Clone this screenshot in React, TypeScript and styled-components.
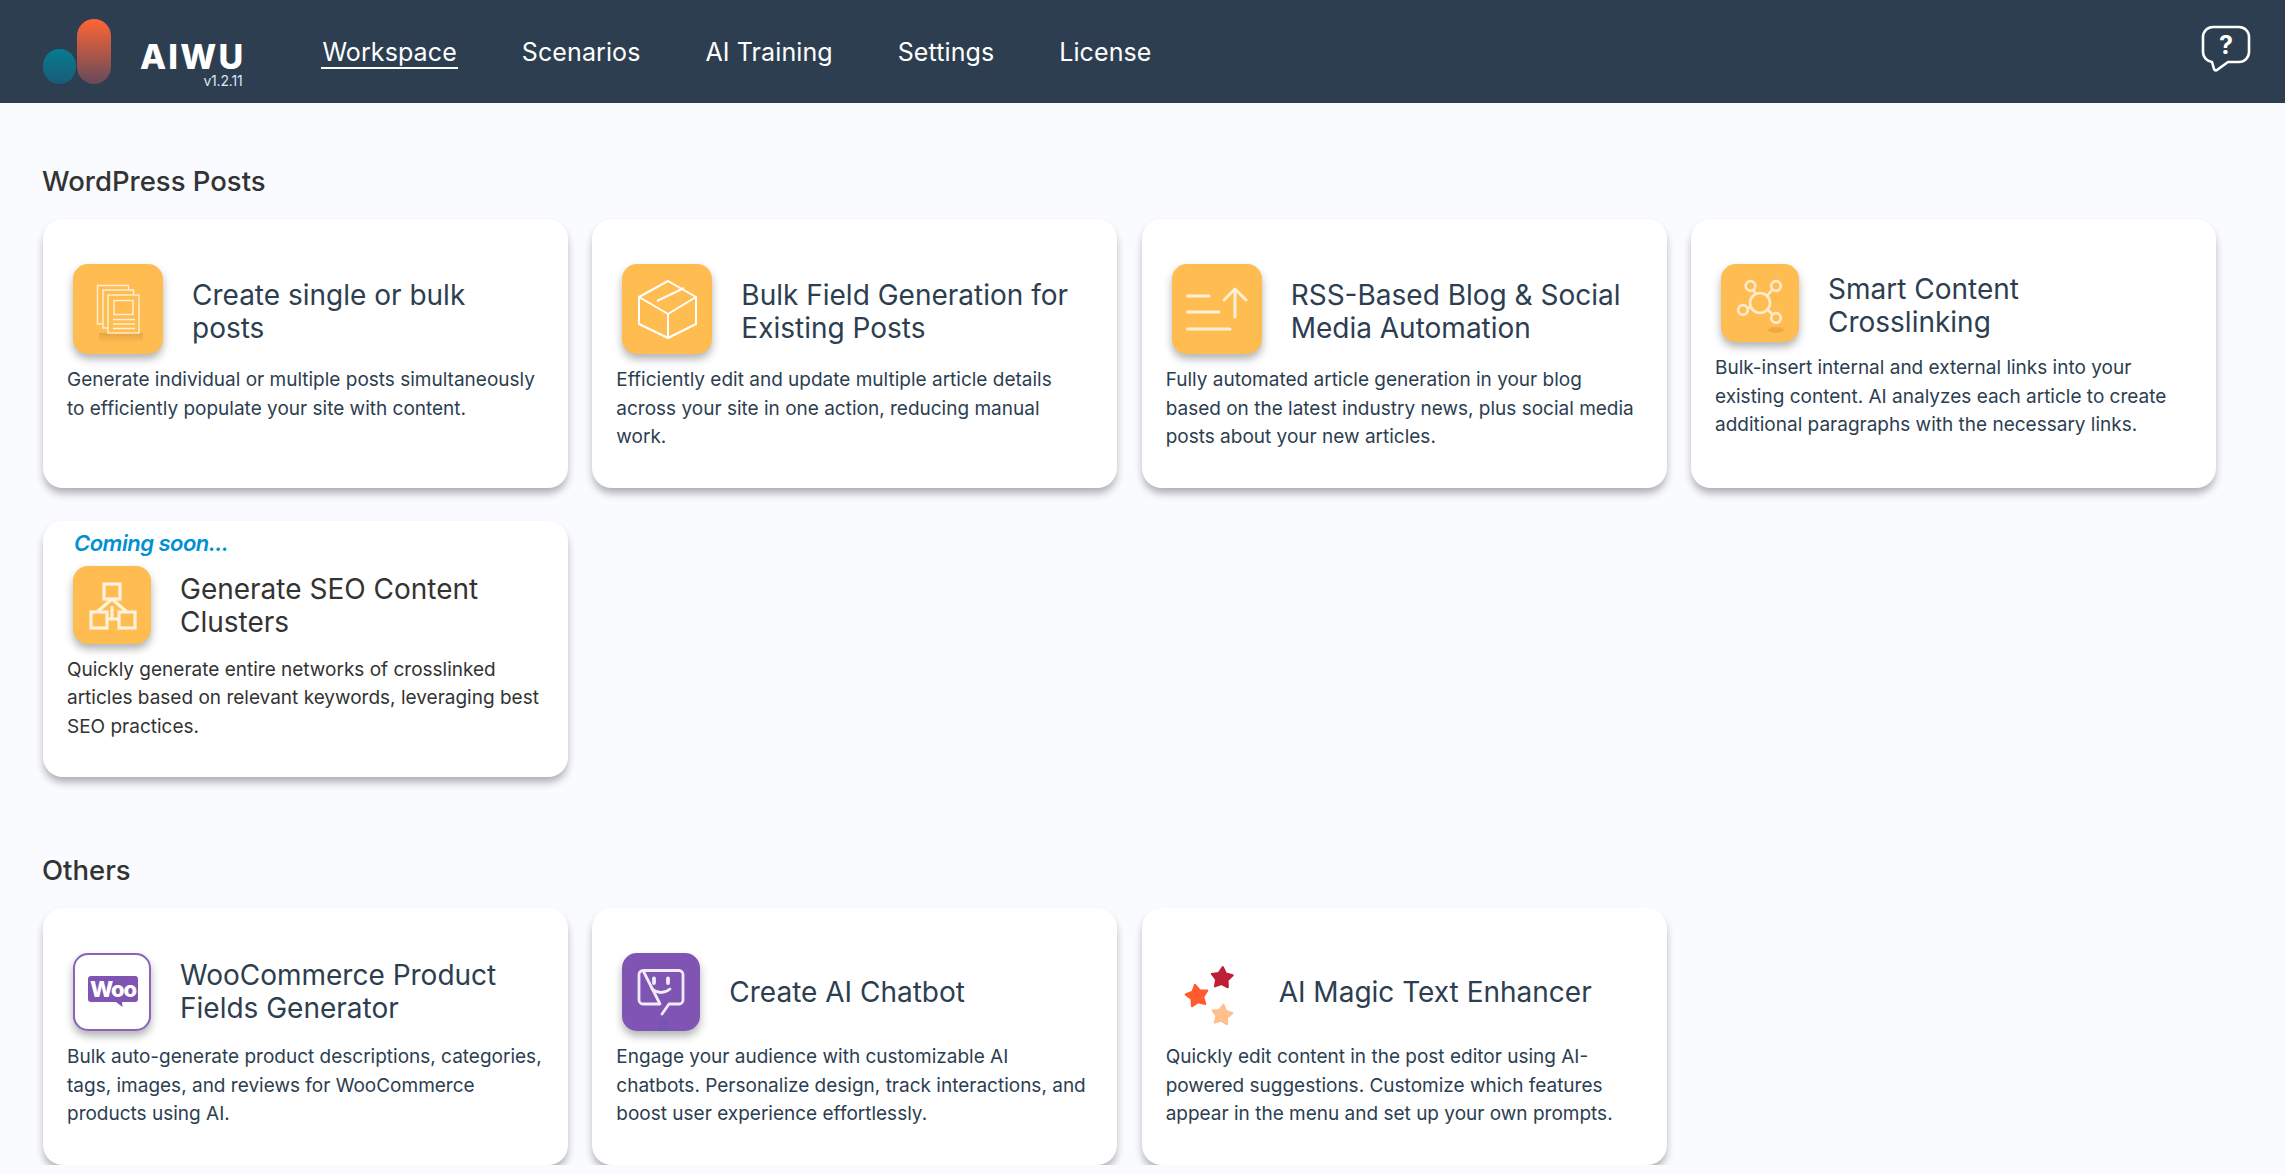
import React from "react";
import styled, { createGlobalStyle } from "styled-components";

const GlobalStyle = createGlobalStyle`
  html, body {
    margin: 0;
    padding: 0;
    background: #f9fbff;
    font-family: "Inter", "Liberation Sans", sans-serif;
  }
`;

const starPoints = (cx: number, cy: number, r: number, rot: number) => {
  const pts: string[] = [];
  for (let i = 0; i < 10; i++) {
    const radius = i % 2 === 0 ? r : r * 0.55;
    const a = ((rot + i * 36 - 90) * Math.PI) / 180;
    pts.push(`${(cx + radius * Math.cos(a)).toFixed(1)},${(cy + radius * Math.sin(a)).toFixed(1)}`);
  }
  return pts.join(" ");
};

const LogoMark = () => (
  <svg width="68" height="65" viewBox="0 0 68 65">
    <defs>
      <linearGradient id="logoTall" x1="0" y1="0" x2="0" y2="1">
        <stop offset="0" stopColor="#ff6534" />
        <stop offset="1" stopColor="#654a5c" />
      </linearGradient>
      <linearGradient id="logoShort" x1="0" y1="0" x2="0" y2="1">
        <stop offset="0" stopColor="#047d90" />
        <stop offset="1" stopColor="#1b5a76" />
      </linearGradient>
    </defs>
    <rect x="0" y="30" width="33" height="35" rx="16.5" fill="url(#logoShort)" />
    <rect x="34" y="0" width="34" height="65" rx="17" fill="url(#logoTall)" />
  </svg>
);

const HelpIcon = () => (
  <svg width="50" height="48" viewBox="0 0 50 48" fill="none">
    <path
      d="M12 2 H38 a10 10 0 0 1 10 10 V27 a10 10 0 0 1 -10 10 H27 L16 45 a2 2 0 0 1 -3 -1 L11 37 a10 10 0 0 1 -9 -10 V12 a10 10 0 0 1 10 -10 Z"
      stroke="#fff"
      strokeWidth="2.6"
      strokeLinejoin="round"
    />
    <text x="25" y="28.500" textAnchor="middle" fill="#fff" fontSize="25" fontWeight="700" fontFamily="Inter, sans-serif">
      ?
    </text>
  </svg>
);

const PagesIcon = () => (
  <svg width="90" height="90" viewBox="0 0 90 90" fill="none" stroke="#ffefd6" strokeWidth="1.4">
    <defs>
      <linearGradient id="pagesShadow" x1="0" y1="0" x2="0" y2="1">
        <stop offset="0" stopColor="#d99a3c" stopOpacity="0.7" />
        <stop offset="1" stopColor="#d99a3c" stopOpacity="0" />
      </linearGradient>
    </defs>
    <rect x="26" y="69" width="44" height="10" fill="url(#pagesShadow)" stroke="none" />
    <path d="M30 60 H24.5 V21.5 H55.5 V26" />
    <path d="M35 64 H30 V26 H60.5 V31" />
    <rect x="35" y="31" width="31" height="38" />
    <rect x="41" y="36.500" width="19" height="14" />
    <path d="M40 55.500 H62 M40 60 H62 M40 64.500 H62" />
  </svg>
);

const BoxIcon = () => (
  <svg width="90" height="90" viewBox="0 0 90 90" fill="none" stroke="#fff" strokeWidth="2" strokeLinejoin="round">
    <path d="M46 17 L74 33 V60 L46 74 L17 60 V33 Z" />
    <path d="M17 33 L46 50 L74 33 M46 50 V74" />
    <path d="M35 37 L62 24" />
  </svg>
);

const ListUpIcon = () => (
  <svg width="90" height="90" viewBox="0 0 90 90" fill="none" stroke="#ffefd6" strokeWidth="3" strokeLinecap="round" strokeLinejoin="round">
    <path d="M15.500 32 H37 M15.500 48 H47 M15.500 65 H58" />
    <path d="M63 53 V25 M52 36 L63 25 L74 36" />
  </svg>
);

const NetworkIcon = () => (
  <svg width="78" height="78" viewBox="0 0 78 78" fill="none" stroke="#ffeacd" strokeWidth="2.700">
    <ellipse cx="55" cy="66" rx="8" ry="3" fill="#d99a3c" opacity="0.5" stroke="none" />
    <circle cx="39" cy="39" r="10" />
    <circle cx="29.500" cy="22" r="4.800" />
    <circle cx="55" cy="22" r="4.800" />
    <circle cx="22" cy="46" r="4.800" />
    <circle cx="55" cy="54" r="4.800" />
    <path d="M32 26 L35 30 M51 26 L46 32 M27 44 L29.500 43 M47 46 L51 50" />
  </svg>
);

const ClusterIcon = () => (
  <svg width="78" height="78" viewBox="0 0 78 78" fill="none" stroke="#fff1dc" strokeWidth="3.200">
    <rect x="31" y="18" width="16" height="15" />
    <rect x="18" y="46" width="16" height="16" />
    <rect x="46" y="46" width="16" height="16" />
    <path d="M39 33 L24 46 M39 33 L54 46 M34 53 H46 M39 40 V53" />
  </svg>
);

const WooIcon = () => (
  <svg width="74" height="74" viewBox="0 0 74 74">
    <path d="M16 21 H60 a3 3 0 0 1 3 3 V44 a3 3 0 0 1 -3 3 H47 L47.500 52 L41 47 H16 a3 3 0 0 1 -3 -3 V24 a3 3 0 0 1 3 -3 Z" fill="#7f54b3" />
    <text x="38" y="41.500" textAnchor="middle" fill="#fff" fontSize="22" fontWeight="800" fontFamily="Inter, sans-serif" letterSpacing="-1.200">
      Woo
    </text>
  </svg>
);

const ChatIcon = () => (
  <svg width="78" height="78" viewBox="0 0 78 78" fill="none" stroke="#f1eaf8" strokeWidth="2.800" strokeLinecap="round" strokeLinejoin="round">
    <defs>
      <pattern id="chatDots" width="2.400" height="2.400" patternUnits="userSpaceOnUse">
        <circle cx="1.200" cy="1.200" r="0.800" fill="#5a58b0" stroke="none" />
      </pattern>
    </defs>
    <path d="M41 63 L35 78 H49 Z" fill="url(#chatDots)" stroke="none" />
    <path d="M21 17.500 H57 a4 4 0 0 1 4 4 V47 a4 4 0 0 1 -4 4 H47 L40 61 M38 51 H21 a4 4 0 0 1 -4 -4 V21.500 a4 4 0 0 1 4 -4 Z" />
    <path d="M32 25.500 V30 M46 25.500 V30" strokeWidth="3.800" />
    <path d="M30 36 Q39 43 48 36" />
  </svg>
);

const StarsIcon = () => (
  <svg width="78" height="78" viewBox="0 0 78 78" strokeLinejoin="round" strokeWidth="2">
    <polygon points={starPoints(50, 25, 11, 4)} fill="#bb2036" stroke="#bb2036" />
    <polygon points={starPoints(25, 43, 11.500, -10)} fill="#ff5b2e" stroke="#ff5b2e" />
    <polygon points={starPoints(50, 62, 10.500, 8)} fill="#ffbf8e" stroke="#ffbf8e" />
  </svg>
);

type CardData = {
  title: string;
  text: string;
  icon: React.ReactNode;
  size: number;
  tile?: "orange" | "purple" | "white" | "none";
  soon?: boolean;
  titleDrop?: number;
};

const postCards: CardData[] = [
  {
    title: "Create single or bulk\nposts",
    text: "Generate individual or multiple posts simultaneously\nto efficiently populate your site with content.",
    icon: <PagesIcon />,
    size: 90,
    titleDrop: 5,
  },
  {
    title: "Bulk Field Generation for\nExisting Posts",
    text: "Efficiently edit and update multiple article details\nacross your site in one action, reducing manual\nwork.",
    icon: <BoxIcon />,
    size: 90,
    titleDrop: 5,
  },
  {
    title: "RSS-Based Blog & Social\nMedia Automation",
    text: "Fully automated article generation in your blog\nbased on the latest industry news, plus social media\nposts about your new articles.",
    icon: <ListUpIcon />,
    size: 90,
    titleDrop: 5,
  },
  {
    title: "Smart Content\nCrosslinking",
    text: "Bulk-insert internal and external links into your\nexisting content. AI analyzes each article to create\nadditional paragraphs with the necessary links.",
    icon: <NetworkIcon />,
    size: 78,
    titleDrop: 5,
  },
  {
    title: "Generate SEO Content\nClusters",
    text: "Quickly generate entire networks of crosslinked\narticles based on relevant keywords, leveraging best\nSEO practices.",
    icon: <ClusterIcon />,
    size: 78,
    soon: true,
    titleDrop: 2,
  },
];

const otherCards: CardData[] = [
  {
    title: "WooCommerce Product\nFields Generator",
    text: "Bulk auto-generate product descriptions, categories,\ntags, images, and reviews for WooCommerce\nproducts using AI.",
    icon: <WooIcon />,
    size: 78,
    tile: "white",
  },
  {
    title: "Create AI Chatbot",
    text: "Engage your audience with customizable AI\nchatbots. Personalize design, track interactions, and\nboost user experience effortlessly.",
    icon: <ChatIcon />,
    size: 78,
    tile: "purple",
  },
  {
    title: "AI Magic Text Enhancer",
    text: "Quickly edit content in the post editor using AI-\npowered suggestions. Customize which features\nappear in the menu and set up your own prompts.",
    icon: <StarsIcon />,
    size: 78,
    tile: "none",
  },
];

const navItems = ["Workspace", "Scenarios", "AI Training", "Settings", "License"];

const FeatureCard = ({ card }: { card: CardData }) => (
  <Card>
    {card.soon && <SoonLabel>Coming soon...</SoonLabel>}
    <CardHead>
      <IconTile $size={card.size} $tile={card.tile ?? "orange"}>
        {card.icon}
      </IconTile>
      <CardTitle $soon={!!card.soon} $drop={card.titleDrop ?? 0}>
        {card.title}
      </CardTitle>
    </CardHead>
    <CardText $soon={!!card.soon}>{card.text}</CardText>
  </Card>
);

export default function App() {
  return (
    <>
      <GlobalStyle />
      <TopBar>
        <Brand>
          <LogoMark />
          <BrandText>
            <BrandName>AIWU</BrandName>
            <BrandVersion>v1.2.11</BrandVersion>
          </BrandText>
        </Brand>
        <Nav>
          {navItems.map((item, i) => (
            <NavLink key={item} $active={i === 0}>
              {item}
            </NavLink>
          ))}
        </Nav>
        <HelpButton>
          <HelpIcon />
        </HelpButton>
      </TopBar>
      <Main>
        <Section>
          <SectionTitle>WordPress Posts</SectionTitle>
          <CardGrid>
            {postCards.map((card) => (
              <FeatureCard key={card.title} card={card} />
            ))}
          </CardGrid>
        </Section>
        <Section>
          <SectionTitle>Others</SectionTitle>
          <CardGrid>
            {otherCards.map((card) => (
              <FeatureCard key={card.title} card={card} />
            ))}
          </CardGrid>
        </Section>
      </Main>
    </>
  );
}

const TopBar = styled.header`
  display: flex;
  align-items: center;
  height: 103px;
  padding: 0 34px 0 43px;
  background: #2c3e50;
`;

const Brand = styled.div`
  display: flex;
  align-items: center;
  gap: 29px;
`;

const BrandText = styled.div`
  display: flex;
  flex-direction: column;
  align-items: flex-end;
  margin-top: 27px;
`;

const BrandName = styled.div`
  color: #fff;
  font-size: 34px;
  line-height: 30px;
  font-weight: 800;
  letter-spacing: 2.2px;
`;

const BrandVersion = styled.div`
  margin-top: 1px;
  padding-right: 3px;
  color: #dfe6f0;
  font-size: 14px;
  line-height: 16px;
  letter-spacing: -0.2px;
`;

const Nav = styled.nav`
  display: flex;
  align-items: center;
  gap: 63px;
  margin-left: 76px;
`;

const NavLink = styled.a<{ $active: boolean }>`
  display: block;
  margin-top: 2px;
  padding: 0 1px 0;
  color: #fff;
  font-size: 25px;
  line-height: 30px;
  font-weight: 400;
  letter-spacing: 0.1px;
  border-bottom: 2px solid ${(props) => (props.$active ? "#fff" : "transparent")};
`;

const HelpButton = styled.div`
  display: flex;
  margin-left: auto;
  margin-bottom: 6px;
`;

const Main = styled.main`
  display: flex;
  flex-direction: column;
  gap: 76px;
  padding: 61px 0 0 43px;
`;

const Section = styled.section`
  display: flex;
  flex-direction: column;
  gap: 20px;
`;

const SectionTitle = styled.h2`
  margin: 0 0 0 -1px;
  color: #333;
  font-size: 27.5px;
  line-height: 35px;
  font-weight: 500;
`;

const CardGrid = styled.div`
  display: grid;
  grid-template-columns: repeat(4, 525px);
  column-gap: 24.33px;
  row-gap: 33px;
`;

const Card = styled.article`
  position: relative;
  display: flex;
  flex-direction: column;
  gap: 12px;
  padding: 45px 24px 36px;
  background: #fff;
  border-radius: 20px;
  box-shadow: 0 6px 9px -1px rgba(0, 0, 0, 0.32);
`;

const SoonLabel = styled.span`
  position: absolute;
  top: 8px;
  left: 31px;
  color: #0090d4;
  font-size: 22px;
  line-height: 28px;
  font-weight: 600;
  font-style: italic;
  letter-spacing: -0.5px;
`;

const CardHead = styled.div`
  display: flex;
  align-items: center;
  gap: 29px;
  padding-left: 6px;
`;

const tileStyles = {
  orange: "background: #ffbc50; box-shadow: 0 5px 8px rgba(0, 0, 0, 0.3);",
  purple: "background: #7f54b3; box-shadow: 0 5px 8px rgba(0, 0, 0, 0.3);",
  white: "background: #fff; border: 2px solid #8a63b8; box-shadow: 0 5px 8px rgba(0, 0, 0, 0.3);",
  none: "",
};

const IconTile = styled.div<{ $size: number; $tile: keyof typeof tileStyles }>`
  flex: none;
  box-sizing: border-box;
  display: flex;
  align-items: center;
  justify-content: center;
  width: ${(props) => props.$size}px;
  height: ${(props) => props.$size}px;
  border-radius: 15px;
  ${(props) => tileStyles[props.$tile]}
`;

const CardTitle = styled.h3<{ $soon: boolean; $drop: number }>`
  margin: ${(props) => props.$drop}px 0 0;
  color: ${(props) => (props.$soon ? "#333" : "#2c3e50")};
  font-size: 28px;
  line-height: 33px;
  font-weight: 400;
  white-space: pre-line;
`;

const CardText = styled.p<{ $soon: boolean }>`
  margin: 0;
  color: ${(props) => (props.$soon ? "#333" : "#2c3e50")};
  font-size: 19px;
  line-height: 28.5px;
  font-weight: 400;
  white-space: pre-line;
`;
